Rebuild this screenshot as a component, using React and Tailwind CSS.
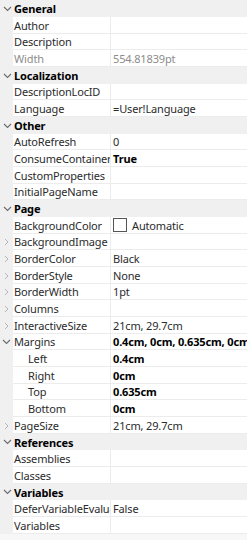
import React from 'react';

const rows = [
  { cat: 'General' },
  { name: 'Author' },
  { name: 'Description' },
  { name: 'Width', value: '554.81839pt', dim: true },
  { cat: 'Localization' },
  { name: 'DescriptionLocID' },
  { name: 'Language', value: '=User!Language' },
  { cat: 'Other' },
  { name: 'AutoRefresh', value: '0' },
  { name: 'ConsumeContainerWhitespace', value: 'True', bold: true },
  { name: 'CustomProperties' },
  { name: 'InitialPageName' },
  { cat: 'Page' },
  { name: 'BackgroundColor', value: 'Automatic', swatch: true },
  { name: 'BackgroundImage', expand: true },
  { name: 'BorderColor', value: 'Black', expand: true },
  { name: 'BorderStyle', value: 'None', expand: true },
  { name: 'BorderWidth', value: '1pt', expand: true },
  { name: 'Columns', expand: true },
  { name: 'InteractiveSize', value: '21cm, 29.7cm', expand: true },
  { name: 'Margins', value: '0.4cm, 0cm, 0.635cm, 0cm', bold: true, open: true },
  { name: 'Left', value: '0.4cm', bold: true, sub: true },
  { name: 'Right', value: '0cm', bold: true, sub: true },
  { name: 'Top', value: '0.635cm', bold: true, sub: true },
  { name: 'Bottom', value: '0cm', bold: true, sub: true },
  { name: 'PageSize', value: '21cm, 29.7cm', expand: true },
  { cat: 'References' },
  { name: 'Assemblies' },
  { name: 'Classes' },
  { cat: 'Variables' },
  { name: 'DeferVariableEvaluation', value: 'False' },
  { name: 'Variables' },
];

function ChevronDown() {
  return (
    <svg width="9" height="6" viewBox="0 0 9 6" className="text-[#6b6b6b]">
      <path d="M1 1l3.5 3.5L8 1" fill="none" stroke="currentColor" strokeWidth="1.1" />
    </svg>
  );
}

function ChevronRight() {
  return (
    <svg width="5" height="8" viewBox="0 0 5 8" className="text-[#b5b5b5]">
      <path d="M1 1l3 3-3 3" fill="none" stroke="currentColor" strokeWidth="1" />
    </svg>
  );
}

export default function App() {
  return (
    <div className="w-[247px] h-[540px] flex bg-[#f0f0f0] font-['Noto_Sans',sans-serif] text-[11px] tracking-[-0.15px] leading-none text-[#1e1e1e] overflow-hidden">
      <div className="flex-1 flex flex-col">
        {rows.map((r, i) => {
          const h = i % 3 === 2 ? 'h-[16px]' : 'h-[17px]';
          if (r.cat) {
            return (
              <div key={i} className={`${h} flex items-center bg-[#f0f0f0]`}>
                <div className="w-[13px] flex justify-center pl-[1px]">
                  <ChevronDown />
                </div>
                <span className="pl-[1px] font-bold text-black">{r.cat}</span>
              </div>
            );
          }
          return (
            <div key={i} className={`${h} flex`}>
              <div className="w-[13px] flex items-center justify-center bg-[#f0f0f0]">
                {r.expand && <ChevronRight />}
                {r.open && <ChevronDown />}
              </div>
              <div
                className={`w-[98px] flex items-center overflow-hidden whitespace-nowrap bg-white border-b border-r border-[#ececec] ${
                  r.sub ? 'pl-[15px]' : 'pl-[1px]'
                } ${r.dim ? 'text-[#8c8c8c]' : 'text-[#2b2b2b]'}`}
              >
                {r.name}
              </div>
              <div
                className={`flex-1 flex items-center overflow-hidden whitespace-nowrap bg-white border-b border-[#ececec] pl-[2px] ${
                  r.dim ? 'text-[#8c8c8c]' : r.bold ? 'text-black font-bold' : 'text-[#2b2b2b]'
                }`}
              >
                {r.swatch && <span className="w-[14px] h-[14px] border border-[#555] bg-white mr-[5px] shrink-0" />}
                {r.value}
              </div>
            </div>
          );
        })}
        <div className="flex-1 bg-[#f7f7f7]" />
      </div>
      <div className="w-[1px] bg-[#9a9a9a]" />
      <div className="w-[2px] bg-[#2a2a2a]" />
    </div>
  );
}
